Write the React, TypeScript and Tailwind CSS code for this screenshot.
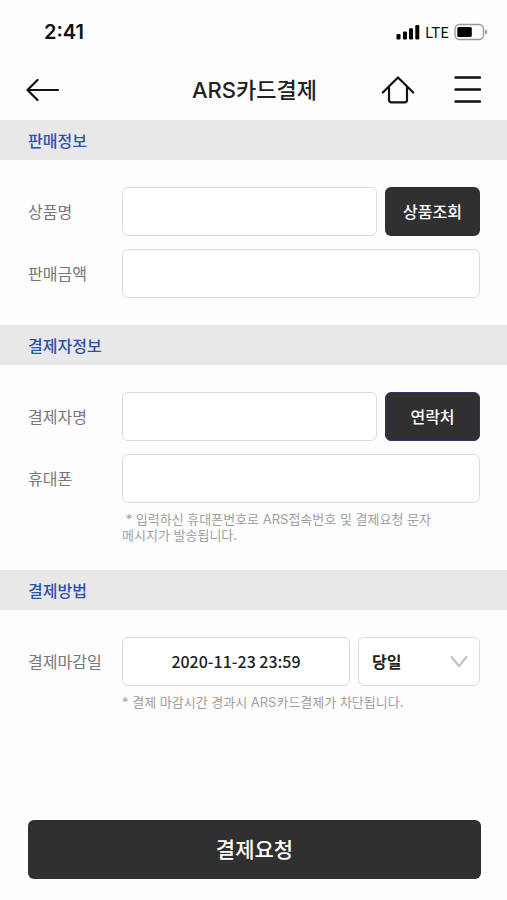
import type { ReactNode } from "react";

const inputStyle = "h-[49px] min-w-0 flex-1 rounded-md border border-[#dcdcdc] bg-white px-3 text-base text-[#222]";
const smallButton = "h-[49px] w-[95px] shrink-0 rounded-md bg-[#303030] pb-0.5 text-base font-medium text-white";

function StatusBar() {
  return (
    <div className="flex h-[60px] items-center justify-between pt-1 pr-[19px] pl-11">
      <span className="font-['Inter',sans-serif] text-xl font-semibold text-[#111]">2:41</span>
      <div className="flex items-center gap-[5px]">
        <svg width="24" height="16" viewBox="0 0 24 16" fill="#000" aria-hidden="true">
          <rect x="0.5" y="10" width="4" height="5.5" rx="1.3" />
          <rect x="7" y="7.5" width="4" height="8" rx="1.3" />
          <rect x="13" y="4.3" width="4" height="11.2" rx="1.3" />
          <rect x="19.3" y="1" width="4" height="14.5" rx="1.3" />
        </svg>
        <span className="text-[15px] text-[#111]">LTE</span>
        <svg width="34" height="18" viewBox="0 0 34 18" aria-hidden="true">
          <rect x="1" y="1.5" width="28.5" height="15" rx="4.5" fill="none" stroke="#9b9b9b" strokeWidth="1.4" />
          <rect x="3.3" y="4" width="14.5" height="10" rx="1.5" fill="#000" />
          <path d="M31 6.5c3 .8 3 4.200 0 5z" fill="#9b9b9b" />
        </svg>
      </div>
    </div>
  );
}

function Header() {
  return (
    <header className="grid h-[60px] grid-cols-[1fr_auto_1fr] items-center pr-6 pl-[26px]">
      <button type="button" aria-label="뒤로" className="w-fit">
        <svg width="34" height="24" viewBox="0 0 34 24" fill="none" stroke="#111" strokeWidth="2.2" strokeLinecap="round" strokeLinejoin="round">
          <path d="M11.500 2 1.500 12l10 10M1.500 12h30.500" />
        </svg>
      </button>
      <h1 className="font-['Inter','Noto_Sans_CJK_KR',sans-serif] text-[22px] font-medium text-[#222]">ARS카드결제</h1>
      <div className="flex items-center justify-end gap-[38px]">
        <button type="button" aria-label="홈">
          <svg width="34" height="30" viewBox="0 0 34 30" fill="none" stroke="#111" strokeWidth="2.200" strokeLinecap="round" strokeLinejoin="round">
            <path d="M1.800 17.500 17 2.500l15.200 15" />
            <path d="M8 12.500V25a2.300 2.300 0 0 0 2.300 2.300h13.400A2.300 2.300 0 0 0 26 25V12.500" />
          </svg>
        </button>
        <button type="button" aria-label="메뉴">
          <svg width="30" height="30" viewBox="0 0 30 30" fill="none" stroke="#111" strokeWidth="2.400" strokeLinecap="round">
            <path d="M2.500 2.500h24.500M2.500 14.500h24.500M2.500 26.500h24.500" />
          </svg>
        </button>
      </div>
    </header>
  );
}

function Section({ title, children }: { title: string; children: ReactNode }) {
  return (
    <section>
      <h2 className="bg-[#e8e8e8] px-7 text-base leading-10 font-medium text-[#2e51ae]">{title}</h2>
      <div className="flex flex-col gap-[13px] py-[27px] pr-[27px] pl-7">{children}</div>
    </section>
  );
}

function Field({ id, label, hint, children }: { id: string; label: string; hint?: ReactNode; children: ReactNode }) {
  return (
    <div className="grid grid-cols-[94px_1fr]">
      <label htmlFor={id} className="flex h-[49px] items-center pb-0.5 text-base text-[#777]">
        {label}
      </label>
      <div className="flex min-w-0 gap-2">{children}</div>
      {hint && (
        <p className="col-start-2 pt-2 font-['Inter','Noto_Sans_CJK_KR',sans-serif] text-[13px] leading-4 text-[#a0a0a0]">{hint}</p>
      )}
    </div>
  );
}

export default function App() {
  return (
    <div className="flex min-h-screen flex-col bg-[#fdfdfd] font-['Noto_Sans_CJK_KR',sans-serif]">
      <StatusBar />
      <Header />
      <form className="flex flex-1 flex-col">
        <Section title="판매정보">
          <Field id="product" label="상품명">
            <input id="product" type="text" className={inputStyle} />
            <button type="button" className={smallButton}>
              상품조회
            </button>
          </Field>
          <Field id="amount" label="판매금액">
            <input id="amount" type="text" inputMode="numeric" className={inputStyle} />
          </Field>
        </Section>

        <Section title="결제자정보">
          <Field id="payer" label="결제자명">
            <input id="payer" type="text" className={inputStyle} />
            <button type="button" className={`${smallButton} border border-[#2b3270]`}>
              연락처
            </button>
          </Field>
          <Field
            id="phone"
            label="휴대폰"
            hint={
              <>
                &nbsp;* 입력하신 휴대폰번호로 ARS접속번호 및 결제요청 문자
                <br />
                메시지가 발송됩니다.
              </>
            }
          >
            <input id="phone" type="tel" className={inputStyle} />
          </Field>
        </Section>

        <Section title="결제방법">
          <Field id="deadline" label="결제마감일" hint="* 결제 마감시간 경과시 ARS카드결제가 차단됩니다.">
            <input id="deadline" type="text" defaultValue="2020-11-23 23:59" className={`${inputStyle} pb-0.5 text-center font-medium`} />
            <div className="relative w-[122px] shrink-0">
              <select
                aria-label="마감 기한"
                className="h-[49px] w-full appearance-none rounded-md border border-[#dcdcdc] bg-white pr-9 pb-0.5 pl-[13px] text-base font-bold text-[#222]"
              >
                <option>당일</option>
              </select>
              <svg
                className="pointer-events-none absolute top-[18px] right-3"
                width="18"
                height="14"
                viewBox="0 0 18 14"
                fill="none"
                stroke="#c4c4c4"
                strokeWidth="2.200"
                strokeLinecap="round"
                aria-hidden="true"
              >
                <path d="M1.500 2l7.500 9 7.500-9" />
              </svg>
            </div>
          </Field>
        </Section>

        <div className="mt-auto pr-[26px] pb-[21px] pl-7">
          <button type="submit" className="h-[59px] w-full rounded-md bg-[#303030] pb-0.5 text-[21px] font-medium text-white">
            결제요청
          </button>
        </div>
      </form>
    </div>
  );
}
